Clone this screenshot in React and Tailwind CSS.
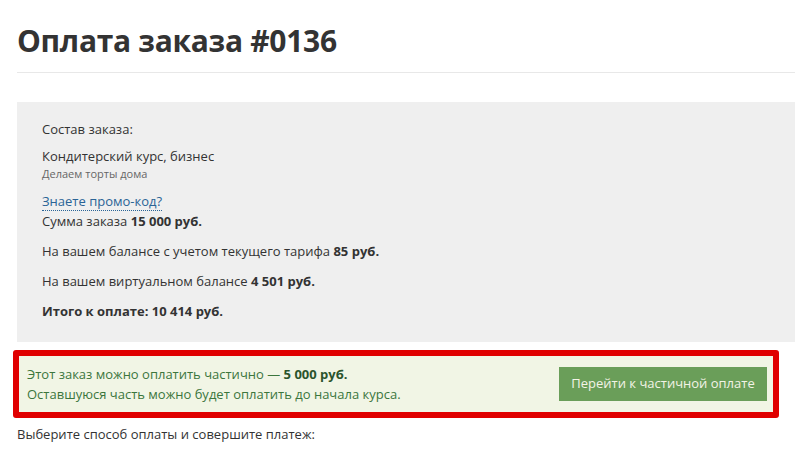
export default function App() {
  return (
    <div className="min-h-[452px] bg-white overflow-hidden font-['Open_Sans',sans-serif] text-[#333]">
      <div className="pl-[17px] w-[820px]">
        <h1 className="pt-[22px] pb-[12px] text-[30px] leading-[38px] font-bold tracking-[-0.3px] border-b border-[#e8e8e8]">
          Оплата заказа #0136
        </h1>

        <div className="mt-[29px] bg-[#efefef] pl-[25px] pt-[17px] h-[240px] text-[13px]">
          <p className="leading-[20px]">Состав заказа:</p>
          <p className="mt-[7px] leading-[20px]">Кондитерский курс, бизнес</p>
          <p className="mt-[1px] text-[11px] leading-[14px] text-[#666]">Делаем торты дома</p>
          <p className="mt-[12px] leading-[16px]">
            <a className="text-[#2a6496] border-b border-dotted border-[#2a6496] cursor-pointer">
              Знаете промо-код?
            </a>
          </p>
          <p className="mt-[2px] leading-[20px]">
            Сумма заказа <b>15 000 руб.</b>
          </p>
          <p className="mt-[10px] leading-[20px]">
            На вашем балансе с учетом текущего тарифа <b>85 руб.</b>
          </p>
          <p className="mt-[10px] leading-[20px]">
            На вашем виртуальном балансе <b>4 501 руб.</b>
          </p>
          <p className="mt-[10px] leading-[20px] font-bold">Итого к оплате: 10 414 руб.</p>
        </div>
      </div>

      <div className="ml-[13px] mt-[8px] w-[766px] border-[6px] border-[#e00000] rounded-[3px]">
        <div className="bg-[#f1f5e5] flex items-center justify-between pl-[8px] pr-[6px] h-[56px] text-[13px] text-[#3c763d]">
          <div className="leading-[20px]">
            <p>
              Этот заказ можно оплатить частично — <b className="text-[#2b542c]">5 000 руб.</b>
            </p>
            <p>Оставшуюся часть можно будет оплатить до начала курса.</p>
          </div>
          <button className="bg-[#6a9e59] text-[#f3f3e6] text-[13px] h-[34px] w-[208px]">
            Перейти к частичной оплате
          </button>
        </div>
      </div>

      <p className="ml-[17px] mt-[6px] text-[13px] leading-[20px]">
        Выберите способ оплаты и совершите платеж:
      </p>
    </div>
  );
}
